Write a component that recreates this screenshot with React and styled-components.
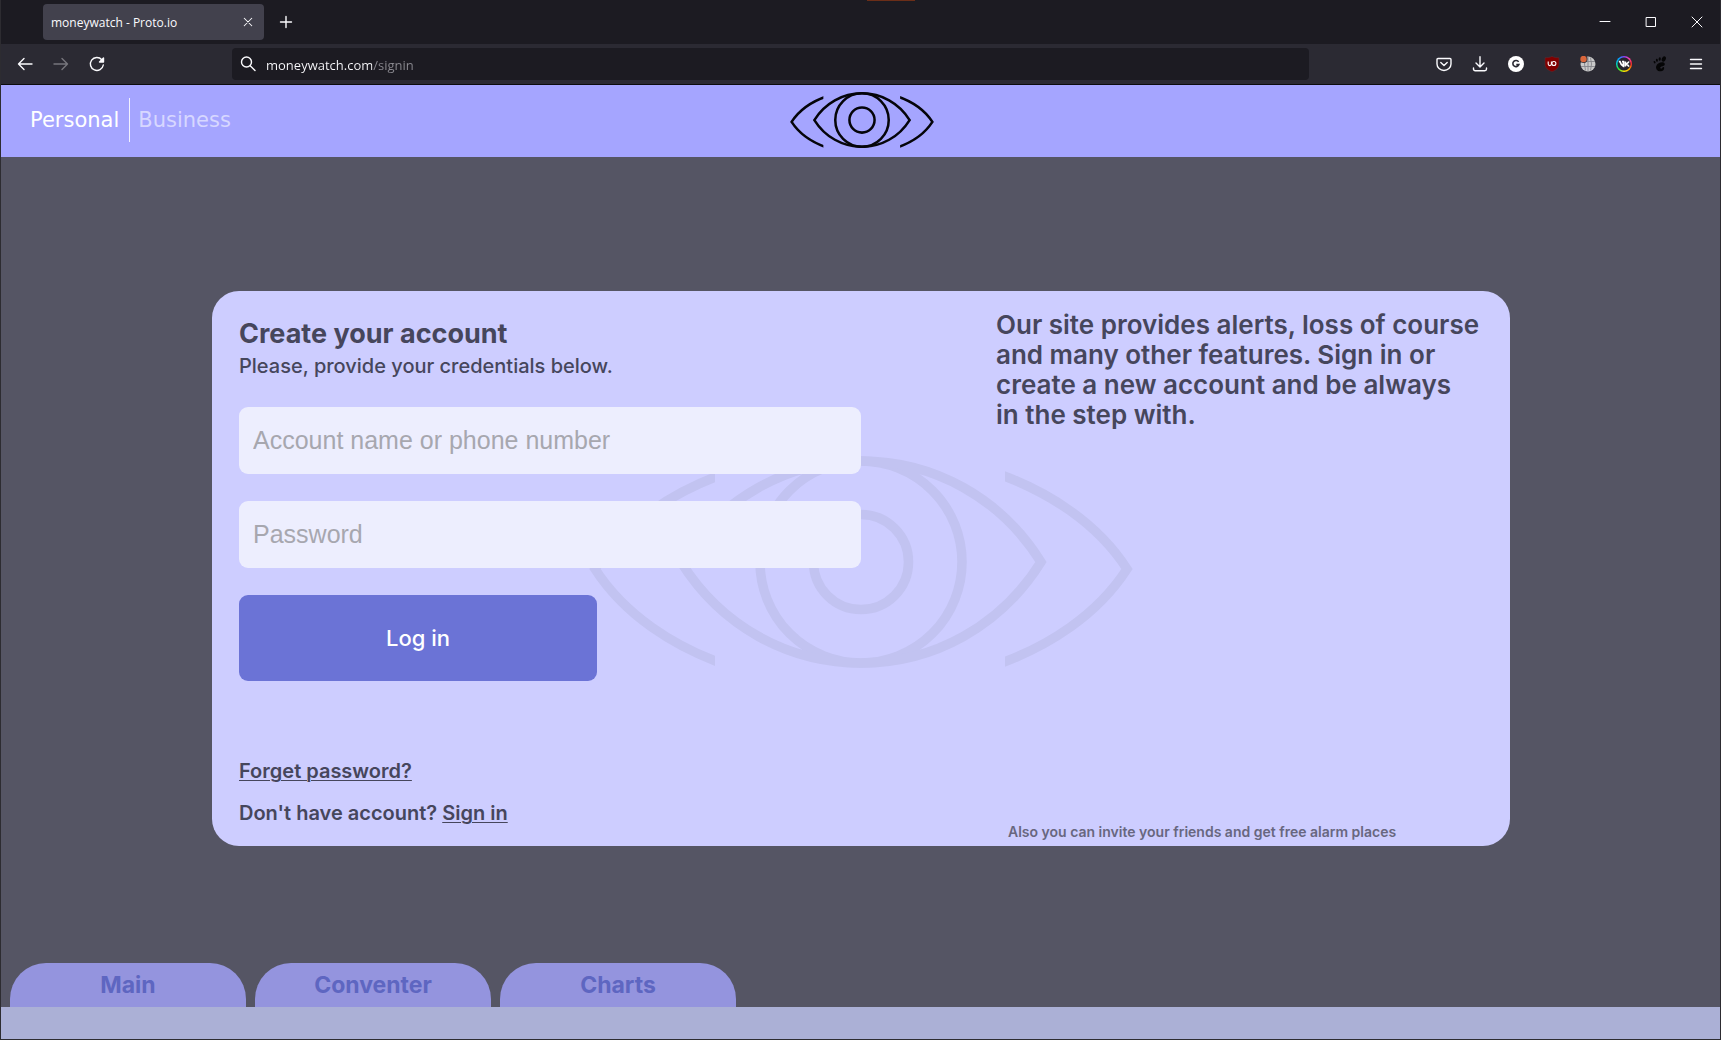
import React, { useId } from "react";
import styled, { createGlobalStyle } from "styled-components";

const sans = `Inter, "Liberation Sans", sans-serif`;
const system = `"Open Sans", "Noto Sans", sans-serif`;

const GlobalStyle = createGlobalStyle`
  *, *::before, *::after { box-sizing: border-box; }
  body { margin: 0; background: #555564; }
  button, input { font: inherit; border: 0; margin: 0; padding: 0; }
  button { background: none; color: inherit; cursor: pointer; }
  svg { display: block; }
`;

const Window = styled.div`
  position: relative;
  display: flex;
  flex-direction: column;
  min-height: 100vh;
  border: solid #2d2c31;
  border-width: 0 1px 1px;
  background: #555564;
  color: #46465c;
  font-family: ${sans};
`;

const TopMark = styled.div`
  position: absolute;
  top: 0;
  left: 50%;
  width: 48px;
  height: 1px;
  margin-left: 6px;
  background: #6b2e18;
`;

const TabStrip = styled.div`
  display: flex;
  align-items: center;
  height: 44px;
  padding-left: 42px;
  background: #1c1b22;
  color: #fbfbfe;
  font-family: ${system};
`;

const BrowserTab = styled.div`
  display: flex;
  align-items: center;
  justify-content: space-between;
  width: 221px;
  height: 36px;
  padding: 0 4px 0 8px;
  border-radius: 4px;
  background: #42414d;
  font-size: 12px;
`;

const IconButton = styled.button`
  display: flex;
  align-items: center;
  justify-content: center;
  width: ${(p) => p.$w || 36}px;
  height: ${(p) => p.$h || 36}px;
  color: ${(p) => (p.$dim ? "#77767d" : "#fbfbfe")};
`;

const NewTab = styled(IconButton)`
  margin-left: 4px;
`;

const WindowControls = styled.div`
  display: flex;
  margin-left: auto;
`;

const Toolbar = styled.div`
  display: flex;
  align-items: center;
  height: 41px;
  padding: 0 6px;
  border-bottom: 1px solid #0c0c0d;
  background: #2b2a33;
  font-family: ${system};
`;

const ToolGroup = styled.div`
  display: flex;
`;

const AddressBar = styled.label`
  display: flex;
  flex: 1;
  align-items: center;
  gap: 10px;
  height: 32px;
  margin: 0 117px;
  padding-left: 8px;
  border-radius: 4px;
  background: #1c1b22;
  color: #fbfbfe;
`;

const AddressInput = styled.input`
  flex: 1;
  min-width: 0;
  height: 26px;
  padding-top: 2px;
  outline: 0;
  font-size: 13px;
  color: #fbfbfe;
  background: linear-gradient(90deg, #fbfbfe 106px, #8a8990 106px);
  background-clip: text;
  -webkit-background-clip: text;
  -webkit-text-fill-color: transparent;
`;

const SiteHeader = styled.header`
  display: grid;
  grid-template-columns: 1fr auto 1fr;
  align-items: center;
  height: 72px;
  padding: 0 26px 2px 29px;
  background: #a5a5ff;
`;

const Audience = styled.nav`
  display: flex;
  align-items: center;
  font: 21px/44px "DejaVu Sans", sans-serif;
`;

const AudienceLink = styled.a`
  color: ${(p) => (p.$active ? "#ffffff" : "#d7d7ff")};
  text-decoration: none;
  ${(p) => (p.$active ? "padding-right: 10px; border-right: 1px solid #f1f1ff;" : "padding-left: 8px;")}
`;

const LogoLink = styled.a`
  color: #05050a;
`;

const Main = styled.main`
  flex: 1;
  padding: 134px 210px 117px 211px;
`;

const Card = styled.section`
  position: relative;
  display: grid;
  grid-template-columns: 1fr 1fr;
  min-height: 555px;
  padding: 0 27px;
  border-radius: 27px;
  background: #cdcdff;
`;

const Watermark = styled.div`
  position: absolute;
  top: 165px;
  left: 50%;
  width: 544px;
  transform: translateX(-50%);
  color: #c2c3f1;
`;

const Form = styled.form`
  position: relative;
  display: flex;
  flex-direction: column;
  align-items: flex-start;
  gap: 27px;
  padding: 25px 0 20px;
`;

const Heading = styled.h1`
  margin: 0;
  font-size: 27px;
  line-height: 36px;
  font-weight: 700;
`;

const Subtitle = styled.p`
  margin: 0;
  font-size: 20px;
  line-height: 28px;
  font-weight: 500;
`;

const Field = styled.input`
  width: 100%;
  height: 67px;
  padding: 0 14px;
  border-radius: 9px;
  background: #edeefe;
  color: #46465c;
  font: 25px/32px "Liberation Sans", Arial, sans-serif;
  &::placeholder { color: #a7a7af; opacity: 1; }
`;

const LoginButton = styled.button`
  width: 358px;
  height: 86px;
  border-radius: 9px;
  background: #6b73d6;
  color: #ffffff;
  font-size: 22px;
  font-weight: 500;
`;

const Links = styled.div`
  display: flex;
  flex-direction: column;
  gap: 16px;
  margin-top: auto;
  font-size: 20px;
  line-height: 26px;
  font-weight: 600;
`;

const TextLink = styled.a`
  color: inherit;
  text-underline-offset: 2px;
  text-decoration-thickness: 1px;
`;

const Pitch = styled.div`
  position: relative;
  display: flex;
  flex-direction: column;
  justify-content: space-between;
  padding: 19px 0 4px 135px;
`;

const PitchText = styled.p`
  margin: 0;
  font-size: 26px;
  line-height: 30px;
  font-weight: 600;
`;

const PitchNote = styled.p`
  margin: 0;
  padding-left: 12px;
  color: #68677f;
  font-size: 14px;
  line-height: 20px;
  font-weight: 600;
`;

const PageTabs = styled.nav`
  display: flex;
  gap: 9px;
  padding: 0 9px;
`;

const PageTab = styled.a`
  width: 236px;
  border-radius: 36px 36px 0 0;
  background: #9494de;
  color: #5e66c1;
  font-size: 23px;
  line-height: 44px;
  font-weight: 700;
  text-align: center;
  text-decoration: none;
`;

const Footer = styled.footer`
  height: 32px;
  background: #abb0d6;
`;

const Line = ({ size = 16, width = 1.4, children }) => (
  <svg width={size} height={size} viewBox="0 0 16 16" fill="none" stroke="currentColor"
    strokeWidth={width} strokeLinecap="round" strokeLinejoin="round" aria-hidden="true">
    {children}
  </svg>
);

function Eye({ width }) {
  const id = useId();
  return (
    <svg width={width} viewBox="0 0 544 212" fill="none" stroke="currentColor" strokeWidth="9.500" aria-hidden="true">
      <clipPath id={id}>
        <path d="M0 0H126V212H0ZM416 0H544V212H416Z" />
      </clipPath>
      <circle cx="272" cy="106" r="101" />
      <circle cx="272" cy="106" r="47.5" />
      <path d="M92 106C132 42 199 5 272 5C345 5 412 42 452 106C412 170 345 207 272 207C199 207 132 170 92 106Z" />
      <g clipPath={`url(#${id})`}>
        <path d="M404 16C460 35 509 68 538 113C509 158 460 191 404 210" />
        <path d="M140 16C84 35 35 68 6 113C35 158 84 191 140 210" />
      </g>
    </svg>
  );
}

const Globe = () => (
  <svg width="16" height="16" viewBox="0 0 16 16" aria-hidden="true">
    <circle cx="8" cy="8" r="7.5" fill="#c9c9c9" />
    <path d="M1 5.500h14M1 10.500h14M8 1v14M5.500 1.500q-2 6.500 0 13M10.500 1.500q2 6.500 0 13" fill="none" stroke="#85858a" strokeWidth=".9" />
    <circle cx="3.500" cy="3" r="4" fill="#2b2a33" />
    <circle cx="3.500" cy="3" r="3.200" fill="#d9663b" />
  </svg>
);

const Shield = () => (
  <svg width="16" height="16" viewBox="0 0 16 16" aria-hidden="true">
    <path d="M8 .3C10 1.500 12.500 1.700 15 1.700V8c0 4-3 6.300-7 7.800C4 14.300 1 12 1 8V1.700C3.500 1.700 6 1.500 8 .3Z" fill="#800000" stroke="#55333a" strokeWidth=".5" />
    <path d="M4.200 5.500v2.500q0 1.600 1.600 1.600t1.600-1.600V5.500" fill="none" stroke="#fff" strokeWidth="1.100" />
    <circle cx="9.900" cy="7.500" r="2" fill="none" stroke="#fff" strokeWidth="1.100" />
  </svg>
);

const Grammar = () => (
  <svg width="16" height="16" viewBox="0 0 16 16" aria-hidden="true">
    <circle cx="8" cy="8" r="8" fill="#fff" />
    <path d="M10.600 5.900A3.100 3.100 0 1 0 10.900 8.600H8.300" fill="none" stroke="#2b2a33" strokeWidth="1.600" />
  </svg>
);

const VkRing = styled.span`
  display: flex;
  align-items: center;
  justify-content: center;
  width: 16px;
  height: 16px;
  border-radius: 50%;
  background: radial-gradient(circle, #26252d 6px, transparent 7px),
    conic-gradient(#8a3ffc, #ff3ea5, #ff2a2a, #ffb000, #fff000, #2ee62e, #00d5c8, #00a2ff, #8a3ffc);
`;

const Vk = () => (
  <VkRing>
    <svg width="12" height="12" viewBox="0 0 12 12" fill="none" stroke="#fff" strokeWidth="1.700" aria-hidden="true">
      <path d="M.8 3.500h1.100Q2.800 6.800 5.400 8.200V3.500H4M7.300 3.500v5M11 3.500Q10 5.600 7.300 6Q10 6.300 11 8.600" />
    </svg>
  </VkRing>
);

const Foot = () => (
  <svg width="16" height="16" viewBox="0 0 16 16" fill="#050506" aria-hidden="true">
    <ellipse cx="11.800" cy="3" rx="1.900" ry="2.700" transform="rotate(28 11.800 3)" />
    <ellipse cx="7.700" cy="3" rx="1.100" ry="1.700" transform="rotate(8 7.700 3)" />
    <ellipse cx="4.900" cy="4.300" rx="1" ry="1.500" transform="rotate(-12 4.900 4.300)" />
    <ellipse cx="2.600" cy="6.200" rx=".9" ry="1.300" transform="rotate(-28 2.600 6.200)" />
    <path d="M12.800 8.200C12.700 5.800 9 5.900 6.600 7.300C4 8.800 3.400 11.500 4.600 13.400C6 15.700 9.600 16 11.300 14.200C12.600 12.800 12.400 10.800 11.200 11C10.200 11.200 10.400 12.800 9 12.600C7.800 12.300 8 10.800 9.500 10.400C11 10 12.800 9.900 12.800 8.200Z" />
  </svg>
);

const toolbarActions = [
  ["Save to Pocket", <Line key="i"><path d="M2 2.500h12a1 1 0 0 1 1 1V8A7 6.500 0 0 1 1 8V3.500a1 1 0 0 1 1-1ZM4.800 6.500 8 9.500l3.200-3" /></Line>],
  ["Downloads", <Line key="i"><path d="M8 .8v10M4 7l4 4 4-4M1.500 12v1a1.700 1.700 0 0 0 1.700 1.700h9.600A1.700 1.700 0 0 0 14.500 13v-1" /></Line>],
  ["Grammar checker", <Grammar key="i" />],
  ["Ad blocker", <Shield key="i" />],
  ["Proxy", <Globe key="i" />],
  ["VK", <Vk key="i" />],
  ["GNOME extensions", <Foot key="i" />],
  ["Menu", <Line key="i"><path d="M2.500 3.500h11M2.500 8h11M2.500 12.500h11" /></Line>],
];

export default function App() {
  return (
    <>
      <GlobalStyle />
      <Window>
        <TabStrip>
          <BrowserTab>
            <span>moneywatch - Proto.io</span>
            <IconButton aria-label="Close tab" $w={24} $h={24}>
              <Line size={12} width={1.4}><path d="M3 3l10 10M13 3 3 13" /></Line>
            </IconButton>
          </BrowserTab>
          <NewTab aria-label="New tab">
            <Line><path d="M8 2.500v11M2.500 8h11" /></Line>
          </NewTab>
          <WindowControls>
            <IconButton aria-label="Minimize" $w={46}><Line width={1}><path d="M3 7.500h10" /></Line></IconButton>
            <IconButton aria-label="Maximize" $w={46}><Line width={1}><path d="M3.500 3.500h9v9h-9Z" /></Line></IconButton>
            <IconButton aria-label="Close window" $w={46}><Line width={1}><path d="M3 3l10 10M13 3 3 13" /></Line></IconButton>
          </WindowControls>
        </TabStrip>
        <TopMark />
        <Toolbar>
          <ToolGroup>
            <IconButton aria-label="Back"><Line><path d="M1.500 8H15M7 2.500 1.500 8 7 13.500" /></Line></IconButton>
            <IconButton aria-label="Forward" $dim><Line><path d="M1 8h13.500M9 2.500 14.500 8 9 13.500" /></Line></IconButton>
            <IconButton aria-label="Reload">
              <Line><path d="M14.300 9A6.500 6.500 0 1 1 12.800 3.700" /><path d="M14.500 2v4h-4Z" fill="currentColor" /></Line>
            </IconButton>
          </ToolGroup>
          <AddressBar>
            <Line><circle cx="6.500" cy="6" r="5" /><path d="m10.200 9.700 4.800 4.800" /></Line>
            <AddressInput aria-label="Address" defaultValue="moneywatch.com/signin" />
          </AddressBar>
          <ToolGroup>
            {toolbarActions.map(([label, icon]) => (
              <IconButton key={label} aria-label={label}>{icon}</IconButton>
            ))}
          </ToolGroup>
        </Toolbar>

        <SiteHeader>
          <Audience>
            <AudienceLink href="#personal" $active>Personal</AudienceLink>
            <AudienceLink href="#business">Business</AudienceLink>
          </Audience>
          <LogoLink href="#home" aria-label="moneywatch">
            <Eye width={144} />
          </LogoLink>
        </SiteHeader>

        <Main>
          <Card>
            <Watermark><Eye width={544} /></Watermark>
            <Form onSubmit={(e) => e.preventDefault()}>
              <div>
                <Heading>Create your account</Heading>
                <Subtitle>Please, provide your credentials below.</Subtitle>
              </div>
              <Field aria-label="Account name or phone number" placeholder="Account name or phone number" />
              <Field type="password" aria-label="Password" placeholder="Password" />
              <LoginButton type="submit">Log in</LoginButton>
              <Links>
                <div><TextLink href="#forgot">Forget password?</TextLink></div>
                <div>Don't have account? <TextLink href="#signin">Sign in</TextLink></div>
              </Links>
            </Form>
            <Pitch>
              <PitchText>
                Our site provides alerts, loss of course and many other features. Sign in or create a new
                account and be always
                <br />
                in the step with.
              </PitchText>
              <PitchNote>Also you can invite your friends and get free alarm places</PitchNote>
            </Pitch>
          </Card>
        </Main>

        <PageTabs>
          <PageTab href="#main">Main</PageTab>
          <PageTab href="#conventer">Conventer</PageTab>
          <PageTab href="#charts">Charts</PageTab>
        </PageTabs>
        <Footer />
      </Window>
    </>
  );
}
